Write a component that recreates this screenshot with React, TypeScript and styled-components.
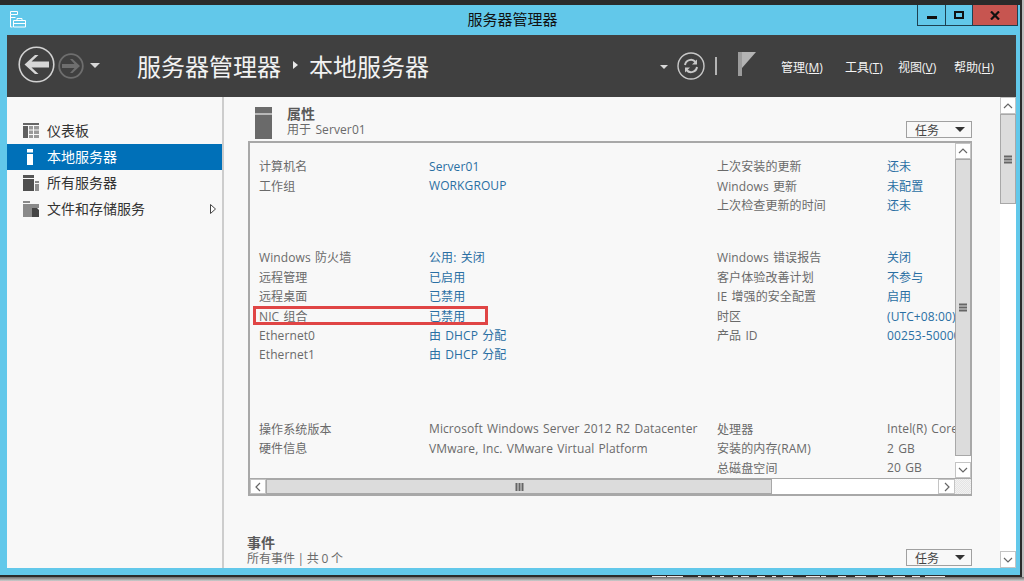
import React from "react";
import styled, { createGlobalStyle } from "styled-components";

const GlobalStyle = createGlobalStyle`
  html, body {
    margin: 0;
    padding: 0;
    background: #c9c9c9;
  }
  body {
    font-family: "Open Sans", "Noto Sans CJK SC", sans-serif;
    font-size: 12px;
  }
`;

const overview = [
  [
    ["计算机名", "Server01", "上次安装的更新", "还未"],
    ["工作组", "WORKGROUP", "Windows 更新", "未配置"],
    ["", "", "上次检查更新的时间", "还未"],
  ],
  [
    ["Windows 防火墙", "公用: 关闭", "Windows 错误报告", "关闭"],
    ["远程管理", "已启用", "客户体验改善计划", "不参与"],
    ["远程桌面", "已禁用", "IE 增强的安全配置", "启用"],
    ["NIC 组合", "已禁用", "时区", "(UTC+08:00) 北京，重庆，香港特别行政区，乌鲁木齐"],
    ["Ethernet0", "由 DHCP 分配", "产品 ID", "00253-50000-00000-AA442"],
    ["Ethernet1", "由 DHCP 分配", "", ""],
  ],
  [
    ["操作系统版本", "Microsoft Windows Server 2012 R2 Datacenter", "处理器", "Intel(R) Core(TM) i5 CPU"],
    ["硬件信息", "VMware, Inc. VMware Virtual Platform", "安装的内存(RAM)", "2 GB"],
    ["", "", "总磁盘空间", "20 GB"],
  ],
];

const groupGaps = [13.6, 33, 55];

const dashes = [
  [652, 14], [667, 16], [698, 3], [712, 3], [720, 4], [733, 5], [741, 8], [757, 8], [772, 4],
  [783, 10], [806, 14], [821, 5], [838, 8], [855, 11], [878, 7], [893, 12], [912, 8], [925, 20],
];

const Shell = styled.div`
  width: 1024px;
  height: 581px;
  overflow: hidden;
  display: flex;
  flex-direction: column;
  background: #bcbcbc;
`;

const TopEdge = styled.div`
  height: 5px;
  flex: none;
  width: 1022px;
  background: #2b2b2b;
`;

const WindowFrame = styled.div`
  width: 1022px;
  height: 570px;
  flex: none;
  box-sizing: border-box;
  display: flex;
  flex-direction: column;
  background: #62c8ea;
  border-right: 2px solid #2b2b2b;
  padding: 0 4px 7px 7px;
`;

const TitleBar = styled.div`
  height: 30px;
  flex: none;
  display: grid;
  grid-template-columns: 1fr auto 1fr;
  margin-left: -7px;
  padding-left: 9px;
`;

const AppIcon = styled.svg`
  width: 17px;
  height: 17px;
  margin-top: 6px;
`;

const Title = styled.div`
  font-size: 15px;
  line-height: 29px;
  color: #111;
`;

const WindowControls = styled.div`
  justify-self: end;
  display: flex;
  height: 21px;
  margin-right: -2px;
  border: 1px solid #1d4152;
  border-top: 0;
  box-sizing: border-box;
`;

const ControlButton = styled.div<{ $width: number; $close?: boolean }>`
  width: ${(p) => p.$width}px;
  display: flex;
  align-items: center;
  justify-content: center;
  background: ${(p) => (p.$close ? "#c75550" : "transparent")};
  & + & {
    border-left: 1px solid #1d4152;
  }
`;

const Header = styled.div`
  height: 62px;
  flex: none;
  display: flex;
  align-items: center;
  background: #404040;
  padding: 0 21px 0 11px;
`;

const NavButtons = styled.div`
  display: flex;
  align-items: center;
  margin-bottom: 3px;
`;

const ForwardIcon = styled.svg`
  margin: 2px 0 0 3px;
`;

const SmallCaret = styled.div<{ $gap: number; $size: number }>`
  width: 0;
  height: 0;
  margin: 2px 0 0 ${(p) => p.$gap}px;
  border-left: ${(p) => p.$size}px solid transparent;
  border-right: ${(p) => p.$size}px solid transparent;
  border-top: ${(p) => p.$size}px solid #d8d8d8;
`;

const Breadcrumb = styled.div`
  display: flex;
  align-items: center;
  margin: 0 0 2px 37px;
  font-size: 24px;
  color: #f2f2f2;
`;

const CrumbArrow = styled.div`
  width: 0;
  height: 0;
  margin: 0 11px 0 12px;
  border-top: 4px solid transparent;
  border-bottom: 4px solid transparent;
  border-left: 5px solid #e8e8e8;
`;

const HeaderActions = styled.div`
  margin-left: auto;
  display: flex;
  align-items: center;
`;

const RefreshIcon = styled.svg`
  margin-left: 9px;
`;

const Divider = styled.div`
  width: 2px;
  height: 18px;
  margin: 0 21px 0 10px;
  background: #b4b4b4;
`;

const FlagIcon = styled.svg`
  margin-bottom: 4px;
`;

const Menu = styled.div`
  display: grid;
  grid-template-columns: 64px 53px 56px 41px;
  margin: 1px 0 0 25px;
  color: #f4f4f4;
  font-size: 12px;
  white-space: nowrap;
`;

const Body = styled.div`
  flex: 1;
  display: flex;
  min-height: 0;
`;

const Sidebar = styled.div`
  width: 217px;
  flex: none;
  box-sizing: border-box;
  padding-top: 21px;
  background: #f8f8f8;
  border-right: 2px solid #cdcdcd;
`;

const NavRow = styled.div<{ $active?: boolean }>`
  height: 26px;
  display: flex;
  align-items: center;
  padding: 0 6px 0 16px;
  font-size: 14px;
  color: ${(p) => (p.$active ? "#fff" : "#333")};
  background: ${(p) => (p.$active ? "#0070b8" : "transparent")};
`;

const NavIcon = styled.svg`
  flex: none;
  margin-right: 8px;
`;

const NavText = styled.span`
  margin-bottom: 2px;
`;

const NavChevron = styled.svg`
  margin-left: auto;
`;

const Main = styled.div`
  flex: 1;
  display: flex;
  min-width: 0;
  background: #f8f8f8;
`;

const Content = styled.div`
  flex: 1;
  min-width: 0;
  padding: 10px 28px 0 24px;
`;

const SectionHead = styled.div<{ $top?: number }>`
  height: 34px;
  display: flex;
  margin-top: ${(p) => p.$top ?? 0}px;
`;

const ServerBlock = styled.svg`
  flex: none;
  margin: 0 15px 0 7px;
`;

const SectionText = styled.div<{ $shift?: number }>`
  flex: 1;
  margin-left: ${(p) => p.$shift ?? 0}px;
`;

const SectionTitle = styled.div`
  font-size: 14px;
  line-height: 15px;
  font-weight: 700;
  color: #5a5a5a;
  margin: -1px 0 1px;
`;

const SectionSub = styled.div<{ $tight?: boolean }>`
  font-size: 12px;
  line-height: 16px;
  color: #6a6a6a;
  letter-spacing: ${(p) => (p.$tight ? "0" : "0.1px")};
  word-spacing: ${(p) => (p.$tight ? "-0.5px" : "1px")};
`;

const TaskButton = styled.div<{ $bottom: number }>`
  width: 66px;
  height: 17px;
  box-sizing: border-box;
  align-self: flex-end;
  display: flex;
  align-items: center;
  justify-content: space-between;
  margin: 0 0 ${(p) => p.$bottom}px;
  padding: 0 6px 0 8px;
  border: 1px solid #a0a0a0;
  font-size: 12px;
  color: #444;
`;

const TaskCaret = styled.div`
  width: 0;
  height: 0;
  border-left: 5px solid transparent;
  border-right: 5px solid transparent;
  border-top: 5px solid #333;
`;

const Panel = styled.div`
  height: 355px;
  box-sizing: border-box;
  border: 2px solid #a8a8a8;
  border-right-width: 1px;
  display: grid;
  grid-template-columns: 1fr 16px;
  grid-template-rows: 1fr 16px;
`;

const Viewport = styled.div`
  overflow: hidden;
  padding-left: 9px;
  min-width: 0;
  letter-spacing: 0.1px;
  word-spacing: 1px;
`;

const Group = styled.div<{ $top: number }>`
  position: relative;
  display: grid;
  width: 900px;
  grid-template-columns: 170px 288px 170px 272px;
  grid-auto-rows: 19.4px;
  align-items: center;
  margin-top: ${(p) => p.$top}px;
  white-space: nowrap;
`;

const Label = styled.div`
  color: #6a6a6a;
`;

const Value = styled.div<{ $plain?: boolean }>`
  color: ${(p) => (p.$plain ? "#6a6a6a" : "#2a6fa3")};
`;

const Highlight = styled.div`
  position: absolute;
  left: -6px;
  top: 58px;
  width: 235px;
  height: 19px;
  box-sizing: border-box;
  border: 3px solid #e04545;
`;

const VBar = styled.div`
  display: flex;
  flex-direction: column;
  background: #fff;
`;

const HBar = styled.div`
  display: flex;
  background: #fff;
  border-top: 1px solid #a8a8a8;
`;

const Arrow = styled.div<{ $size: number }>`
  flex: none;
  width: 100%;
  height: ${(p) => p.$size}px;
  box-sizing: border-box;
  display: flex;
  align-items: center;
  justify-content: center;
  background: #fff;
  border: 1px solid #c4c4c4;
`;

const HArrow = styled(Arrow)`
  width: ${(p) => p.$size}px;
  height: 100%;
`;

const VThumb = styled.div<{ $size: number }>`
  flex: none;
  height: ${(p) => p.$size}px;
  box-sizing: border-box;
  display: flex;
  align-items: center;
  justify-content: center;
  background: #dcdcdc;
  border: 1px solid #a8a8a8;
`;

const HThumb = styled(VThumb)`
  width: ${(p) => p.$size}px;
  height: 100%;
`;

const Spacer = styled.div`
  flex: 1;
`;

const Corner = styled.div`
  background: repeating-conic-gradient(#e4e4e4 0 25%, #f2f2f2 0 50%) 0 0 / 2px 2px;
  border-top: 1px solid #a8a8a8;
`;

const OuterBar = styled(VBar)`
  width: 16px;
  flex: none;
`;

const BottomEdge = styled.div`
  flex: none;
  width: 1022px;
  height: 1px;
  background: #2b2b2b;
`;

const DashLine = styled.svg`
  display: block;
  flex: none;
  background: #2b2b2b;
`;

const FootShade = styled.div`
  flex: 1;
  background: linear-gradient(#6d6d6d, #cfcfcf);
`;

const Chevron = ({ dir }: { dir: "up" | "down" | "left" | "right" }) => {
  const points = {
    up: "1,6 5,2 9,6",
    down: "1,2 5,6 9,2",
    left: "6,1 2,5 6,9",
    right: "2,1 6,5 2,9",
  }[dir];
  const vertical = dir === "up" || dir === "down";
  return (
    <svg width={vertical ? 10 : 8} height={vertical ? 8 : 10}>
      <polyline points={points} fill="none" stroke="#666" strokeWidth="1.2" />
    </svg>
  );
};

const Grip = ({ vertical }: { vertical?: boolean }) => (
  <svg width={vertical ? 8 : 9} height={vertical ? 9 : 8}>
    {[0, 3, 6].map((o) =>
      vertical ? (
        <rect key={o} x="0" y={o + 0.5} width="8" height="2" fill="#666" />
      ) : (
        <rect key={o} x={o + 0.5} y="0" width="2" height="8" fill="#666" />
      )
    )}
  </svg>
);

const Task = ({ bottom }: { bottom: number }) => (
  <TaskButton $bottom={bottom}>
    任务
    <TaskCaret />
  </TaskButton>
);

export default function App() {
  return (
    <>
      <GlobalStyle />
      <Shell>
        <TopEdge />
        <WindowFrame>
          <TitleBar>
            <AppIcon viewBox="0 0 17 17" fill="none" stroke="#fff" strokeWidth="1">
              <path d="M1.5 0.5h7v3h-7zM1.5 3.5v12.5h2M1.5 6.5h5" />
              <path d="M4.5 9.5h12v6.5h-12zM8 9.5v-2h5v2M4.5 12.5h12" />
            </AppIcon>
            <Title>服务器管理器</Title>
            <WindowControls>
              <ControlButton $width={27}>
                <svg width="10" height="8">
                  <rect x="0" y="5" width="10" height="3" fill="#111" />
                </svg>
              </ControlButton>
              <ControlButton $width={26}>
                <svg width="10" height="8">
                  <rect x="1" y="1" width="8" height="6" fill="none" stroke="#111" strokeWidth="2" />
                </svg>
              </ControlButton>
              <ControlButton $width={44} $close>
                <svg width="10" height="9">
                  <path d="M1 0.5l8 8M9 0.5l-8 8" stroke="#111" strokeWidth="2.2" />
                </svg>
              </ControlButton>
            </WindowControls>
          </TitleBar>

          <Header>
            <NavButtons>
              <svg width="37" height="37" viewBox="0 0 37 37" fill="none">
                <circle cx="18.5" cy="18.5" r="17.3" stroke="#d2d2d2" strokeWidth="1.6" />
                <path d="M6.5 18.5L17 9h3.5l-7 6.5H31v6H13.5l7 6.5H17z" fill="#d6d6d6" />
              </svg>
              <ForwardIcon width="26" height="26" viewBox="0 0 26 26" fill="none">
                <circle cx="13" cy="13" r="11.8" stroke="#6e6e6e" strokeWidth="1.8" />
                <path d="M22 13l-7.5-7H12l4.5 5H4v4h12.5L12 20h2.5z" fill="#6e6e6e" />
              </ForwardIcon>
              <SmallCaret $gap={6} $size={5} />
            </NavButtons>
            <Breadcrumb>
              服务器管理器
              <CrumbArrow />
              本地服务器
            </Breadcrumb>
            <HeaderActions>
              <SmallCaret $gap={0} $size={4} />
              <RefreshIcon width="28" height="28" viewBox="0 0 28 28" fill="none">
                <circle cx="14" cy="14" r="13" stroke="#c8c8c8" strokeWidth="1.4" />
                <path d="M8 13a6 6 0 0 1 10.5-3" stroke="#c8c8c8" strokeWidth="2" />
                <path d="M20 7.5v5h-5z" fill="#c8c8c8" />
                <path d="M20 15a6 6 0 0 1-10.5 3" stroke="#c8c8c8" strokeWidth="2" />
                <path d="M8 20.5v-5h5z" fill="#c8c8c8" />
              </RefreshIcon>
              <Divider />
              <FlagIcon width="18" height="24" viewBox="0 0 18 24">
                <rect x="0" y="0" width="4" height="24" fill="#9c9c9c" />
                <path d="M4 0h14L4 16z" fill="#b4b4b4" />
              </FlagIcon>
              <Menu>
                <div>
                  管理(<u>M</u>)
                </div>
                <div>
                  工具(<u>T</u>)
                </div>
                <div>
                  视图(<u>V</u>)
                </div>
                <div>
                  帮助(<u>H</u>)
                </div>
              </Menu>
            </HeaderActions>
          </Header>

          <Body>
            <Sidebar>
              <NavRow>
                <NavIcon width="16" height="16" viewBox="0 0 16 16">
                  <rect y="0" width="16" height="2" fill="#666" />
                  <rect y="3" width="5" height="12" fill="#5f5f5f" />
                  <path d="M6 3h4v3.5H6zM11 3h5v3.5h-5zM6 7.5h4V11H6zM11 7.5h5V11h-5zM6 12h4v3H6zM11 12h5v3h-5z" fill="#9a9a9a" />
                </NavIcon>
                <NavText>仪表板</NavText>
              </NavRow>
              <NavRow $active>
                <NavIcon width="16" height="16" viewBox="0 0 16 16">
                  <rect x="4" y="0" width="6" height="3.5" fill="#fff" />
                  <rect x="4" y="5" width="6" height="11" fill="#fff" />
                </NavIcon>
                <NavText>本地服务器</NavText>
              </NavRow>
              <NavRow>
                <NavIcon width="16" height="16" viewBox="0 0 16 16">
                  <rect x="0" y="0" width="11" height="3" fill="#555" />
                  <rect x="0" y="4" width="11" height="12" fill="#4f4f4f" />
                  <rect x="12" y="6" width="4" height="2" fill="#8a8a8a" />
                  <rect x="12" y="9" width="4" height="7" fill="#8f8f8f" />
                </NavIcon>
                <NavText>所有服务器</NavText>
              </NavRow>
              <NavRow>
                <NavIcon width="16" height="16" viewBox="0 0 16 16">
                  <path d="M0 0h7v2H0zM0 3h16v4H11v9H0z" fill="#8a8a8a" />
                  <path d="M9 7h5l2 2v7H9z" fill="#454545" />
                </NavIcon>
                <NavText>文件和存储服务</NavText>
                <NavChevron width="6" height="10" viewBox="0 0 6 10">
                  <path d="M0.5 0.5L5.5 5L0.5 9.5z" fill="#fff" stroke="#444" />
                </NavChevron>
              </NavRow>
            </Sidebar>

            <Main>
              <Content>
                <SectionHead>
                  <ServerBlock width="17" height="32" viewBox="0 0 17 32">
                    <rect width="17" height="6" fill="#6c6c6c" />
                    <rect y="6" width="17" height="2" fill="#b8b8b8" />
                    <rect y="8" width="17" height="24" fill="#6a6a6a" />
                  </ServerBlock>
                  <SectionText>
                    <SectionTitle>属性</SectionTitle>
                    <SectionSub>用于 Server01</SectionSub>
                  </SectionText>
                  <Task bottom={3} />
                </SectionHead>

                <Panel>
                  <Viewport>
                    {overview.map((rows, g) => (
                      <Group key={g} $top={groupGaps[g]}>
                        {rows.map((row, r) => (
                          <React.Fragment key={r}>
                            <Label>{row[0]}</Label>
                            <Value $plain={g === 2}>{row[1]}</Value>
                            <Label>{row[2]}</Label>
                            <Value $plain={g === 2}>{row[3]}</Value>
                          </React.Fragment>
                        ))}
                        {g === 1 && <Highlight />}
                      </Group>
                    ))}
                  </Viewport>
                  <VBar>
                    <Arrow $size={16}>
                      <Chevron dir="up" />
                    </Arrow>
                    <VThumb $size={297}>
                      <Grip vertical />
                    </VThumb>
                    <Spacer />
                    <Arrow $size={16}>
                      <Chevron dir="down" />
                    </Arrow>
                  </VBar>
                  <HBar>
                    <HArrow $size={16}>
                      <Chevron dir="left" />
                    </HArrow>
                    <HThumb $size={506}>
                      <Grip />
                    </HThumb>
                    <Spacer />
                    <HArrow $size={17}>
                      <Chevron dir="right" />
                    </HArrow>
                  </HBar>
                  <Corner />
                </Panel>

                <SectionHead $top={39.5}>
                  <SectionText $shift={-1}>
                    <SectionTitle>事件</SectionTitle>
                    <SectionSub $tight>所有事件 | 共 0 个</SectionSub>
                  </SectionText>
                  <Task bottom={3.5} />
                </SectionHead>
              </Content>

              <OuterBar>
                <Arrow $size={17}>
                  <Chevron dir="up" />
                </Arrow>
                <VThumb $size={90}>
                  <Grip vertical />
                </VThumb>
                <Spacer />
                <Arrow $size={17}>
                  <Chevron dir="down" />
                </Arrow>
              </OuterBar>
            </Main>
          </Body>
        </WindowFrame>
        <BottomEdge />
        <DashLine width="1022" height="1">
          {dashes.map(([x, w]) => (
            <rect key={x} x={x} y="0" width={w} height="1" fill="#e8e8e8" />
          ))}
        </DashLine>
        <FootShade />
      </Shell>
    </>
  );
}
